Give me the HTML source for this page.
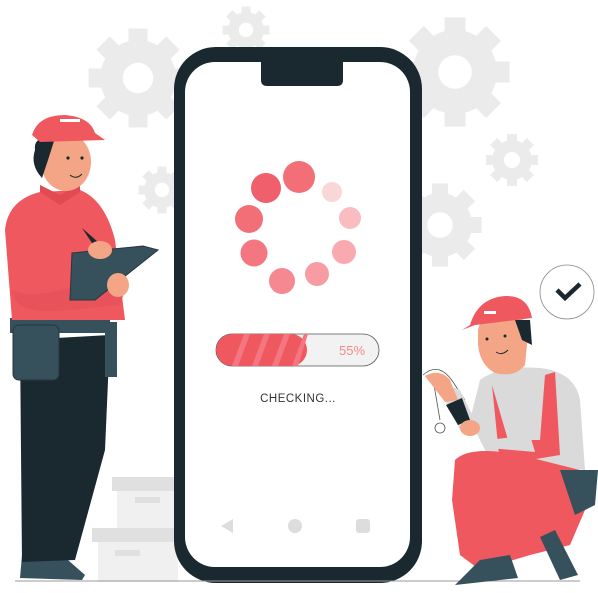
<!DOCTYPE html>
<html><head><meta charset="utf-8"><style>
html,body{margin:0;padding:0;background:#fff;width:598px;height:593px;overflow:hidden}
svg{display:block}
</style></head><body>
<svg width="598" height="593" viewBox="0 0 598 593" xmlns="http://www.w3.org/2000/svg">
<defs>
<g id="gear">
<circle r="40" fill="#ebebeb"/>
<g fill="#ebebeb">
<rect x="-10" y="-52" width="20" height="104"/>
<rect x="-10" y="-52" width="20" height="104" transform="rotate(45)"/>
<rect x="-10" y="-52" width="20" height="104" transform="rotate(90)"/>
<rect x="-10" y="-52" width="20" height="104" transform="rotate(135)"/>
</g>
<circle r="16" fill="#fff"/>
</g>
<clipPath id="bar"><rect x="216" y="334" width="163" height="32" rx="16"/></clipPath>
</defs>
<use href="#gear" transform="translate(455,72) scale(1.05)"/>
<use href="#gear" transform="translate(138,78) scale(0.95)"/>
<use href="#gear" transform="translate(246,30) scale(0.45)"/>
<use href="#gear" transform="translate(512,160) scale(0.5)"/>
<use href="#gear" transform="translate(440,225) scale(0.8)"/>
<use href="#gear" transform="translate(162,190) scale(0.45)"/>
<rect x="112" y="477" width="70" height="14" fill="#e0e0e0"/>
<rect x="117" y="491" width="60" height="38" fill="#f0f0f0"/>
<rect x="135" y="497" width="25" height="6" fill="#e0e0e0"/>
<rect x="92" y="528" width="90" height="14" fill="#e0e0e0"/>
<rect x="98" y="542" width="80" height="40" fill="#f0f0f0"/>
<rect x="115" y="550" width="25" height="6" fill="#e0e0e0"/>
<rect x="174" y="47" width="248" height="536" rx="42" fill="#1a2930"/>
<rect x="185" y="62" width="225" height="505" rx="30" fill="#fff"/>
<path d="M261 60 H343 V80 Q343 86 337 86 H267 Q261 86 261 80 Z" fill="#1a2930"/>
<circle cx="299" cy="177" r="16" fill="#f36f78"/>
<circle cx="266" cy="188" r="15" fill="#f0606c"/>
<circle cx="249" cy="219" r="14" fill="#f36f78"/>
<circle cx="254" cy="253" r="13.5" fill="#f47680"/>
<circle cx="282" cy="281" r="13" fill="#f58890"/>
<circle cx="317" cy="274" r="12" fill="#f79ca2"/>
<circle cx="344" cy="252" r="12" fill="#f8aab0"/>
<circle cx="350" cy="218" r="11" fill="#f9bcc1"/>
<circle cx="332" cy="192" r="10" fill="#fbd6d9"/>
<rect x="216" y="334" width="163" height="32" rx="16" fill="#f2f2f2" stroke="#555" stroke-width="0.8"/>
<g clip-path="url(#bar)">
<rect x="216" y="334" width="91" height="32" rx="16" fill="#f0585f"/>
<g fill="#f47680"><path d="M232 366 l12 -32 h6 l-12 32z"/><path d="M252 366 l12 -32 h6 l-12 32z"/><path d="M272 366 l12 -32 h6 l-12 32z"/><path d="M292 366 l12 -32 h4 l-10 32z"/></g>
</g>
<text x="352" y="355" font-family="Liberation Sans,sans-serif" font-size="13" fill="#f28a90" text-anchor="middle">55%</text>
<text x="298" y="402" font-family="Liberation Sans,sans-serif" font-size="11.5" fill="#333" text-anchor="middle" letter-spacing="0.5">CHECKING...</text>
<path d="M233 519 L221 526 L233 533 Z" fill="#ddd"/>
<circle cx="295" cy="526" r="7" fill="#ddd"/>
<rect x="356" y="519" width="14" height="14" rx="3" fill="#ddd"/>
<line x1="15" y1="581" x2="580" y2="581" stroke="#999" stroke-width="1"/>
<!-- left man -->
<path d="M20 578 L22 555 L60 553 L85 575 L82 580 Z" fill="#37515c"/>
<path d="M20 340 L110 335 L105 450 L75 560 L22 562 Z" fill="#1a2930"/>
<path d="M10 318 H110 V333 H10 Z" fill="#37515c"/>
<rect x="13" y="325" width="46" height="55" rx="6" fill="#37515c" stroke="#26363e" stroke-width="1"/>
<rect x="105" y="322" width="12" height="55" fill="#37515c"/>
<path d="M5 230 Q8 200 40 192 L80 190 Q105 200 115 240 L125 320 L12 320 Z" fill="#f0585f"/>
<path d="M40 185 L60 195 L80 185 L80 192 L60 205 L40 192 Z" fill="#e14a52"/>
<path d="M12 290 Q30 300 80 285 L125 290 L120 305 L70 310 Q25 315 15 300Z" fill="#e8525a"/>
<ellipse cx="66" cy="162" rx="25" ry="29" fill="#f4a585"/>
<path d="M35 150 Q33 135 55 138 L48 160 L42 178 Q30 165 35 150Z" fill="#1a2930"/>
<path d="M32 135 Q38 115 65 115 Q90 117 95 133 L105 140 L40 142 Z" fill="#f0585f"/>
<path d="M60 119 h20 v3 h-20z" fill="#fff"/>
<circle cx="68" cy="158" r="1.6" fill="#1a2930"/>
<circle cx="82" cy="158" r="1.6" fill="#1a2930"/>
<path d="M70 175 Q76 180 82 174" fill="none" stroke="#1a2930" stroke-width="1"/>
<path d="M72 253 L143 246 L158 250 L95 300 L70 300 Z" fill="#37515c" stroke="#26363e" stroke-width="1"/>
<path d="M82 228 L98 242 L94 246 Z" fill="#1a2930"/>
<ellipse cx="100" cy="250" rx="12" ry="9" fill="#f4a585"/>
<ellipse cx="118" cy="285" rx="11" ry="12" fill="#f4a585"/>
<!-- bubble -->
<circle cx="567" cy="292" r="27" fill="#fff" stroke="#888" stroke-width="0.8"/>
<path d="M557 290 L565 298 L580 284" fill="none" stroke="#1a2930" stroke-width="4.5"/>
<!-- right man -->
<path d="M423 375 Q440 360 455 385 L465 400" fill="none" stroke="#555" stroke-width="0.8"/>
<path d="M434 385 L440 420" fill="none" stroke="#555" stroke-width="0.8"/>
<circle cx="440" cy="428" r="5" fill="none" stroke="#555" stroke-width="0.8"/>
<path d="M480 380 Q500 365 540 368 Q575 372 580 400 L585 470 L490 460 L470 420 Z" fill="#dadada"/>
<path d="M492 385 L508 440 L540 440 L545 375 L555 372 L560 455 L500 465 Z" fill="#f0585f"/>
<path d="M455 460 Q470 445 520 455 L580 470 L585 510 L570 545 L530 555 L480 570 L460 555 L452 500 Z" fill="#f0585f"/>
<path d="M560 470 L598 470 L595 505 L575 515 Z" fill="#37515c"/>
<path d="M455 585 L480 560 L510 555 L518 578 Z" fill="#37515c"/>
<path d="M540 537 L555 530 L578 575 L560 580 Z" fill="#37515c"/>
<path d="M445 400 Q440 380 460 390 L475 420 L460 430 Z" fill="#dadada"/>
<path d="M425 376 Q440 368 450 380 L458 400 L445 402 Z" fill="#f4a585"/>
<path d="M446 405 L462 398 L470 420 L458 425 Z" fill="#1a2930"/>
<ellipse cx="470" cy="428" rx="10" ry="8" fill="#f4a585"/>
<path d="M488 440 L530 435 L535 452 L490 448 Z" fill="#dadada"/>
<path d="M478 330 Q480 315 505 315 Q530 315 528 335 L525 365 Q515 378 495 373 Q480 365 478 345 Z" fill="#f4a585"/>
<path d="M515 320 L530 320 L532 345 L522 340 Z" fill="#1a2930"/>
<path d="M470 325 Q478 298 505 296 Q528 295 532 318 L475 325 L462 330 Z" fill="#f0585f"/>
<rect x="484" y="311" width="12" height="3" fill="#fff"/>
<circle cx="487" cy="339" r="1.5" fill="#1a2930"/>
<circle cx="505" cy="336" r="1.5" fill="#1a2930"/>
<path d="M496 352 Q502 356 508 350" fill="none" stroke="#1a2930" stroke-width="1"/>
</svg>
</body></html>
